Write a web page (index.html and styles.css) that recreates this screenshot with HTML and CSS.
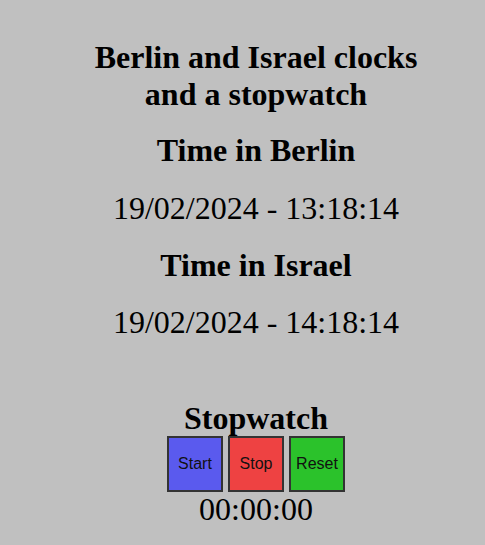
FILE: index.html
```html
<!DOCTYPE html>
<html>
<head>
<meta charset="utf-8">
<title>Clocks</title>
<link rel="stylesheet" href="styles.css">
</head>
<body>
<main class="page">
  <h1 class="title">Berlin and Israel clocks and a stopwatch</h1>
  <h1 class="heading heading-berlin">Time in Berlin</h1>
  <p class="clock clock-berlin">19/02/2024 - 13:18:14</p>
  <h1 class="heading heading-israel">Time in Israel</h1>
  <p class="clock clock-israel">19/02/2024 - 14:18:14</p>
  <section class="stopwatch">
    <h1 class="heading sw-heading">Stopwatch</h1>
    <div class="buttons">
      <button class="btn btn-start">Start</button>
      <button class="btn btn-stop">Stop</button>
      <button class="btn btn-reset">Reset</button>
    </div>
    <div class="sw-time">00:00:00</div>
  </section>
</main>
</body>
</html>
```
FILE: styles.css
```css
html, body {
  margin: 0;
  padding: 0;
  background: #c0c0c0;
}
body {
  font-family: "Liberation Serif", "Times New Roman", serif;
  color: #000;
}
.page {
  padding: 39px 0 0 27px;
  text-align: center;
}
.title {
  font-size: 32px;
  font-weight: bold;
  margin: 0 auto;
  max-width: 360px;
}
.heading {
  font-size: 32px;
  font-weight: bold;
  margin: 22px 0 0;
}
.heading-berlin {
  margin-top: 19px;
}
.heading-israel {
  margin-top: 20px;
}
.clock {
  font-size: 32px;
  font-weight: normal;
  margin: 19px 0 0;
}
.clock-berlin {
  margin-top: 21px;
}
.clock-israel {
  margin-top: 20px;
}
.stopwatch {
  display: flex;
  flex-direction: column;
  align-items: center;
}
.sw-heading {
  margin-top: 59px;
  line-height: 36px;
}
.buttons {
  display: flex;
  justify-content: center;
  gap: 5px;
}
.btn {
  width: 56px;
  height: 56px;
  border: 2px solid #333;
  padding: 0;
  font-family: "Liberation Sans", Arial, sans-serif;
  font-size: 16px;
  color: #111;
  cursor: pointer;
}
.btn-start { background: #5a5aee; }
.btn-stop { background: #ee4242; }
.btn-reset { background: #2bc22b; }
.sw-time {
  font-size: 32px;
  line-height: 37px;
  margin-top: -1px;
}
```
